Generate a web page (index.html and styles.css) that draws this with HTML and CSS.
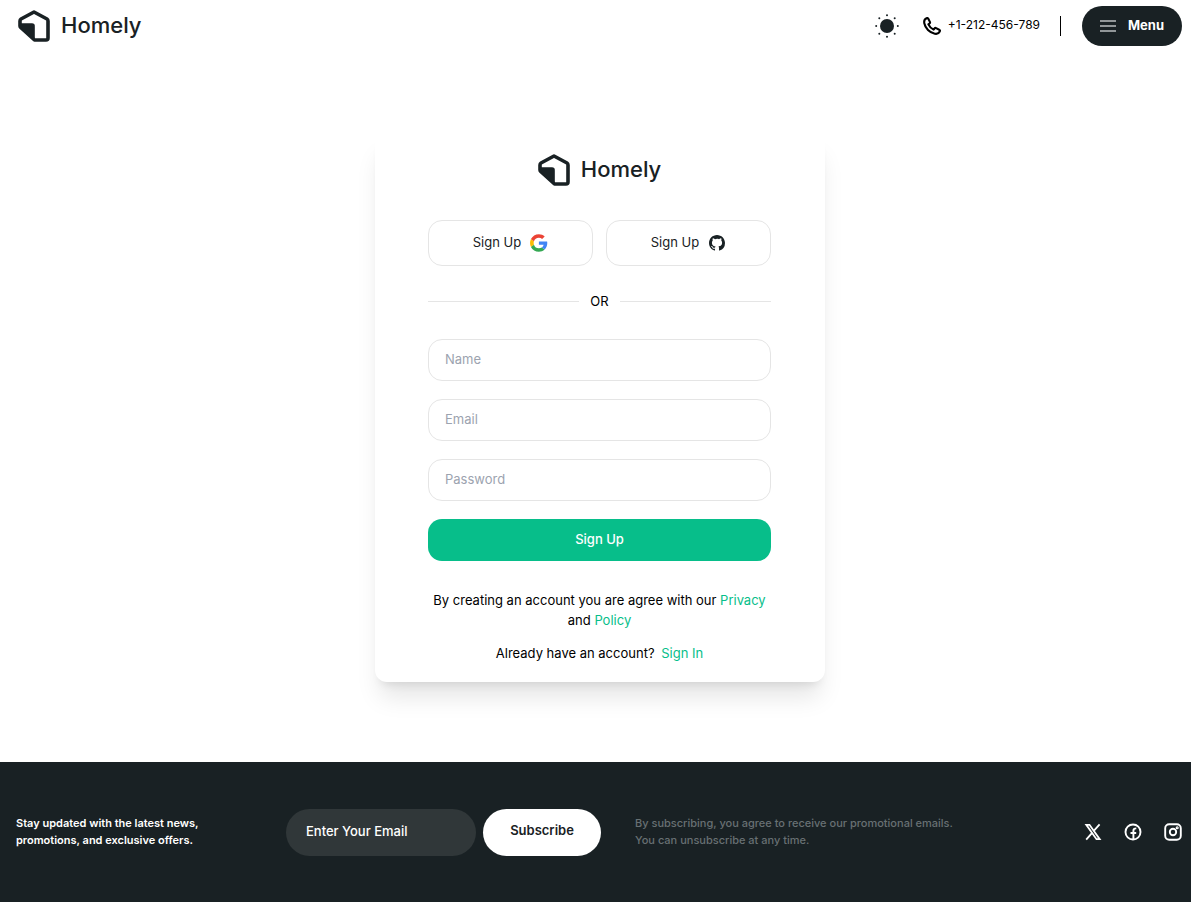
FILE: index.html
```html
<!DOCTYPE html>
<html lang="en">
<head>
<meta charset="utf-8">
<meta name="viewport" content="width=device-width, initial-scale=1">
<title>Homely – Sign Up</title>
<link rel="stylesheet" href="styles.css">
</head>
<body>
<svg class="defs" aria-hidden="true">
  <symbol id="house" viewBox="0 0 32 32">
    <path d="M16 2 29 9Q30 9.600 30 11V28Q30 30 28 30H16.500L2.700 17.500Q2 16.800 2 16V11Q2 9.600 3 9Z" fill="none" stroke="currentColor" stroke-width="3.600" stroke-linejoin="round"/>
    <path d="M2 13.300H14Q16.800 13.300 16.800 16V30.500L2 17Z" fill="currentColor"/>
  </symbol>
</svg>
<header class="header">
  <a class="logo" href="#"><svg class="logo-mark" aria-hidden="true"><use href="#house"/></svg><span>Homely</span></a>
  <div class="header-tools">
    <button class="theme" type="button" aria-label="Toggle theme">
      <svg width="24" height="24" viewBox="0 0 24 24" fill="currentColor"><circle cx="12" cy="12" r="7"/><circle cx="12" cy="1.200" r="1"/><circle cx="12" cy="22.800" r="1"/><circle cx="1.200" cy="12" r="1"/><circle cx="22.800" cy="12" r="1"/><circle cx="4.300" cy="4.300" r="1"/><circle cx="19.700" cy="4.300" r="1"/><circle cx="4.300" cy="19.700" r="1"/><circle cx="19.700" cy="19.700" r="1"/></svg>
    </button>
    <a class="phone" href="tel:+1-212-456-789">
      <svg width="18" height="18" viewBox="0 0 18 18" fill="none" stroke="currentColor" stroke-width="2.100" stroke-linejoin="round"><path d="M3.600 1.200C1.500 2.100.9 4 1.300 6.200 2.300 11.300 6.600 15.700 11.800 16.700 14 17.100 15.900 16.500 16.800 14.400 17.100 13.700 16.800 13 16.200 12.700L13.100 11.100C12.500 10.800 11.900 11 11.500 11.500L10.600 12.600C8.200 11.500 6.500 9.800 5.400 7.400L6.500 6.500C7 6.100 7.200 5.500 6.900 4.900L5.300 1.800C5 1.200 4.300.9 3.600 1.200Z"/></svg>
      <span>+1-212-456-789</span>
    </a>
    <span class="rule"></span>
    <button class="menu" type="button">
      <svg width="16" height="12" viewBox="0 0 16 12" stroke="#b9bdbe" stroke-width="1.500"><path d="M0 1H16M0 6H16M0 11H16"/></svg>
      <span>Menu</span>
    </button>
  </div>
</header>

<main class="main">
  <section class="card">
    <a class="logo" href="#"><svg class="logo-mark" aria-hidden="true"><use href="#house"/></svg><span>Homely</span></a>
    <div class="providers">
      <button class="provider" type="button"><span>Sign Up</span>
        <svg width="18" height="18" viewBox="0 0 48 48" aria-label="Google"><path fill="#fbbc05" d="M9.800 24c0-1.500.3-3 .7-4.400L2.600 13.600A23.500 23.500 0 0 0 2.600 34.400l7.900-6A13.800 13.800 0 0 1 9.800 24"/><path fill="#eb4335" d="M23.700 10.100c3.300 0 6.300 1.200 8.600 3.100L39.200 6.400C35 2.800 29.700.5 23.700.5 14.400.5 6.400 5.800 2.600 13.600l7.900 6A14 14 0 0 1 23.700 10.100"/><path fill="#34a853" d="M23.700 37.900a14 14 0 0 1-13.200-9.500l-7.900 6c3.800 7.800 11.800 13.100 21.100 13.100 5.700 0 11.200-2 15.300-5.900l-7.500-5.800c-2.100 1.300-4.800 2.100-7.800 2.100"/><path fill="#4285f4" d="M46.100 24c0-1.400-.2-2.900-.5-4.300H23.700v9.100h12.600c-.6 3.100-2.300 5.500-4.800 7l7.500 5.800c4.300-4 7.100-9.900 7.100-17.600"/></svg>
      </button>
      <button class="provider" type="button"><span>Sign Up</span>
        <svg width="18" height="18" viewBox="-1 -1 18 18" aria-label="GitHub"><path fill="currentColor" d="M8 0C3.580 0 0 3.580 0 8c0 3.540 2.290 6.530 5.470 7.590.4.070.55-.17.55-.38v-1.490c-2.010.37-2.530-.49-2.690-.94-.09-.23-.48-.94-.82-1.130-.28-.15-.68-.52-.01-.53.63-.01 1.080.58 1.230.82.720 1.210 1.870.87 2.330.66.070-.52.280-.87.510-1.070-1.780-.2-3.640-.89-3.640-3.950 0-.87.310-1.590.82-2.150-.08-.2-.36-1.020.08-2.120 0 0 .67-.21 2.200.82A7.600 7.600 0 0 1 8 3.860c.68 0 1.360.09 2 .27 1.530-1.040 2.200-.82 2.200-.82.44 1.100.16 1.920.08 2.120.51.560.82 1.270.82 2.150 0 3.070-1.870 3.750-3.650 3.950.29.250.54.730.54 1.480v2.200c0 .21.150.46.550.38A8.010 8.010 0 0 0 16 8c0-4.420-3.580-8-8-8"/></svg>
      </button>
    </div>
    <div class="divider"><span>OR</span></div>
    <form class="form">
      <input class="field" type="text" placeholder="Name" aria-label="Name">
      <input class="field" type="email" placeholder="Email" aria-label="Email">
      <input class="field" type="password" placeholder="Password" aria-label="Password">
      <button class="submit" type="submit">Sign Up</button>
    </form>
    <p class="terms">By creating an account you are agree with our <a href="#">Privacy</a> and <a href="#">Policy</a></p>
    <p class="signin">Already have an account? <a href="#">Sign In</a></p>
  </section>
</main>

<footer class="footer">
  <p class="pitch">Stay updated with the latest news, promotions, and exclusive offers.</p>
  <form class="newsletter">
    <input class="news-field" type="email" placeholder="Enter Your Email" aria-label="Enter Your Email">
    <button class="subscribe" type="submit">Subscribe</button>
  </form>
  <p class="note">By subscribing, you agree to receive our promotional emails. You can unsubscribe at any time.</p>
  <nav class="social" aria-label="Social">
    <a href="#" aria-label="X"><svg width="18" height="18" viewBox="0 0 18 18" fill="none" stroke="currentColor" stroke-width="1.800"><path d="M2.300 1.800H5.500L15.700 16.200H12.500Z"/><path d="M15.600 1.300 10 7.700M7.900 10.200 2.200 16.700"/></svg></a>
    <a href="#" aria-label="Facebook"><svg width="18" height="18" viewBox="0 0 18 18" fill="none" stroke="currentColor" stroke-width="1.900"><circle cx="9" cy="9" r="7.500"/><path d="M9.400 16.500V7.700Q9.400 5.400 12.300 5.400M6.500 10H12.200"/></svg></a>
    <a href="#" aria-label="Instagram"><svg width="18" height="18" viewBox="0 0 18 18" fill="none" stroke="currentColor" stroke-width="1.900"><rect x="1.200" y="1.200" width="15.600" height="15.600" rx="4"/><circle cx="9" cy="9" r="3.200"/><circle cx="13.200" cy="4.800" r=".6"/></svg></a>
  </nav>
</footer>
</body>
</html>
```
FILE: styles.css
```css
* { box-sizing: border-box; }

body {
  margin: 0;
  min-height: 100vh;
  display: flex;
  flex-direction: column;
  background: #fff;
  color: #000;
  font: 13px/20px Inter, "Liberation Sans", sans-serif;
}

button, input { font: inherit; color: inherit; }
button { border: 0; background: none; padding: 0; cursor: pointer; }
a { text-decoration: none; color: inherit; }
p { margin: 0; }
svg { display: block; flex: none; }
.defs { position: absolute; width: 0; height: 0; }

.header {
  display: flex;
  align-items: center;
  justify-content: space-between;
  padding: 6px 9px 6px 18px;
}

.logo {
  display: flex;
  align-items: center;
  gap: 11px;
  color: #192124;
  font-size: 22px;
  line-height: 30px;
  font-weight: 500;
}
.logo span { padding-bottom: 2px; }
.logo-mark { width: 32px; height: 32px; }

.header-tools { display: flex; align-items: center; color: #192124; }
.theme { margin-right: 24px; }
.phone { display: flex; align-items: center; gap: 7px; color: #000; font-size: 12px; }
.phone span { padding-bottom: 2px; }
.rule { width: 1px; height: 20px; margin: 0 21px 0 20px; background: #000; }
.menu {
  display: flex;
  align-items: center;
  justify-content: center;
  gap: 12px;
  width: 100px;
  height: 40px;
  border-radius: 20px;
  background: #192124;
  color: #fff;
  font-weight: 700;
}
.menu span { padding-bottom: 2px; }

.main {
  flex: 1;
  display: flex;
  justify-content: center;
  align-items: flex-start;
  padding: 80px 16px;
}

.card {
  width: 100%;
  max-width: 450px;
  margin-left: 9px;
  padding: 22px 54px 19px 53px;
  border-radius: 12px;
  background: #fff;
  box-shadow: 0 20px 25px -5px rgb(0 0 0 / 10%), 0 8px 10px -6px rgb(0 0 0 / 10%);
}
.card .logo { justify-content: center; }

.providers { display: grid; grid-template-columns: 1fr 1fr; gap: 13px; margin-top: 34px; }
.provider {
  display: flex;
  align-items: center;
  justify-content: center;
  gap: 9px;
  height: 46px;
  border: 1px solid #e5e5e5;
  border-radius: 14px;
  color: #192124;
}
.provider span { padding-bottom: 2px; }

.divider { display: flex; align-items: center; gap: 11px; margin: 25px 0 28px; }
.divider::before, .divider::after { content: ""; flex: 1; height: 1px; background: #e5e5e5; }

.form { display: grid; gap: 18px; }
.field {
  width: 100%;
  height: 42px;
  padding: 0 16px 3px;
  border: 1px solid #e5e5e5;
  border-radius: 14px;
  background: #fff;
}
.field::placeholder { color: #9ca3af; opacity: 1; }
.submit {
  height: 42px;
  padding-bottom: 2px;
  border-radius: 14px;
  background: #07be8a;
  color: #fff;
  font-weight: 500;
}

.terms, .signin { text-align: center; }
.terms { margin-top: 29px; }
.signin { margin-top: 13px; }
.terms a, .signin a { color: #07be8a; }
.signin a { margin-left: 3px; }

.footer {
  display: flex;
  align-items: center;
  min-height: 140px;
  padding: 0 9px 0 16px;
  background: #192124;
  color: #fff;
  font-size: 11px;
  line-height: 17px;
}
.pitch { width: 200px; margin-right: 70px; font-weight: 600; }
.newsletter { display: flex; gap: 7px; margin-right: 34px; font-size: 13px; }
.news-field {
  width: 190px;
  height: 47px;
  padding: 0 20px 3px;
  border: 0;
  border-radius: 24px;
  background: #303739;
  font-weight: 500;
}
.news-field::placeholder { color: #fff; opacity: 1; }
.subscribe {
  width: 118px;
  height: 47px;
  padding-bottom: 3px;
  border-radius: 24px;
  background: #fff;
  color: #192124;
  font-weight: 600;
}
.note { max-width: 332px; color: #687073; font-weight: 500; }
.social { display: flex; gap: 22px; margin-left: auto; }
```
